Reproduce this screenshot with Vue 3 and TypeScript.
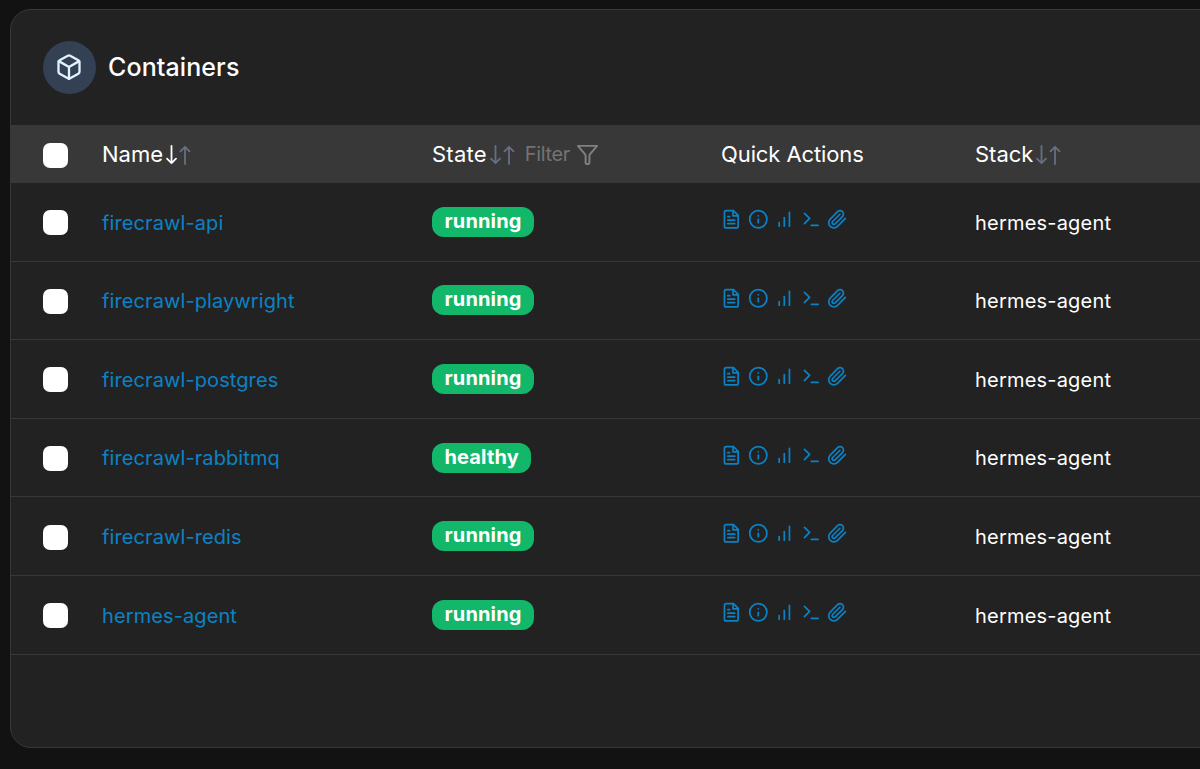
<script setup lang="ts">
interface Container {
  name: string
  state: string
  stack: string
}

const containers: Container[] = [
  { name: 'firecrawl-api', state: 'running', stack: 'hermes-agent' },
  { name: 'firecrawl-playwright', state: 'running', stack: 'hermes-agent' },
  { name: 'firecrawl-postgres', state: 'running', stack: 'hermes-agent' },
  { name: 'firecrawl-rabbitmq', state: 'healthy', stack: 'hermes-agent' },
  { name: 'firecrawl-redis', state: 'running', stack: 'hermes-agent' },
  { name: 'hermes-agent', state: 'running', stack: 'hermes-agent' },
]

const actions: { id: string; paths: string[] }[] = [
  {
    id: 'logs',
    paths: [
      'M14.500 2H6a2 2 0 0 0-2 2v16a2 2 0 0 0 2 2h12a2 2 0 0 0 2-2V7.500z',
      'M14 2v6h6',
      'M16 13H8',
      'M16 17H8',
      'M10 9H8',
    ],
  },
  { id: 'inspect', paths: ['M2 12a10 10 0 1 0 20 0a10 10 0 1 0-20 0', 'M12 16v-4', 'M12 8h.01'] },
  { id: 'stats', paths: ['M12 20V10', 'M18 20V4', 'M6 20v-4'] },
  { id: 'console', paths: ['M4 17l6-6-6-6', 'M12 19h8'] },
  {
    id: 'attach',
    paths: ['m21.44 11.05-9.19 9.19a6 6 0 0 1-8.49-8.49l8.57-8.57A4 4 0 1 1 18 8.84l-8.59 8.57a2 2 0 0 1-2.83-2.83l8.49-8.48'],
  },
]
</script>

<template>
  <main class="page">
    <section class="card">
      <header class="title-bar">
        <span class="badge">
          <svg viewBox="0 0 24 24" class="cube">
            <path d="M21 16V8a2 2 0 0 0-1-1.73l-7-4a2 2 0 0 0-2 0l-7 4A2 2 0 0 0 3 8v8a2 2 0 0 0 1 1.73l7 4a2 2 0 0 0 2 0l7-4A2 2 0 0 0 21 16z" />
            <path d="M3.27 6.96 12 12.01l8.73-5.05M12 22.08V12" />
          </svg>
        </span>
        <h1>Containers</h1>
      </header>

      <div class="row head">
        <span class="check"></span>
        <div class="cell"><span>Name</span>
          <svg class="sort" viewBox="0 0 26 20"><path class="on" d="M6.5 1v17M2 13.7l4.5 4.5 4.5-4.5" /><path d="M20 19V2M15.5 6.3 20 1.8l4.5 4.5" /></svg>
        </div>
        <div class="cell"><span class="state-label">State</span>
          <svg class="sort" viewBox="0 0 26 20"><path d="M6.5 1v17M2 13.7l4.5 4.5 4.5-4.5" /><path d="M20 19V2M15.5 6.3 20 1.8l4.5 4.5" /></svg>
          <span class="filter">Filter</span>
          <svg class="funnel" viewBox="0 0 24 24"><path d="M22 3H2l7.300 8.600q.7.800.7 1.900V20a2 2 0 0 0 4 0v-6.500q0-1.100.7-1.900z" /></svg>
        </div>
        <div class="cell"><span class="quick-label">Quick Actions</span></div>
        <div class="cell"><span>Stack</span>
          <svg class="sort" viewBox="0 0 26 20"><path d="M6.5 1v17M2 13.7l4.5 4.5 4.5-4.5" /><path d="M20 19V2M15.5 6.3 20 1.8l4.5 4.5" /></svg>
        </div>
      </div>

      <div v-for="c in containers" :key="c.name" class="row">
        <span class="check"></span>
        <a class="name">{{ c.name }}</a>
        <div><span class="pill">{{ c.state }}</span></div>
        <div class="actions">
          <svg v-for="a in actions" :key="a.id" viewBox="0 0 24 24">
            <path v-for="p in a.paths" :key="p" :d="p" />
          </svg>
        </div>
        <span class="stack">{{ c.stack }}</span>
      </div>
    </section>
  </main>
</template>

<style>
body {
  background: #121212;
  overflow: hidden;
}
</style>

<style scoped>
.page {
  box-sizing: border-box;
  height: 769px;
  padding: 9px 0 21px 10px;
  overflow: hidden;
  font-family: Inter, sans-serif;
  font-size: 20px;
  color: #fff;
}
.card {
  box-sizing: border-box;
  width: 1230px;
  height: 739px;
  border: 1px solid #383838;
  border-radius: 21px;
  background: #222;
  overflow: hidden;
}
svg {
  display: block;
  flex: none;
  fill: none;
  stroke: currentColor;
  stroke-width: 2;
  stroke-linecap: round;
  stroke-linejoin: round;
}
.title-bar {
  box-sizing: border-box;
  height: 115px;
  padding-left: 32px;
  display: flex;
  align-items: center;
  gap: 12px;
}
.badge {
  width: 53px;
  height: 53px;
  border-radius: 50%;
  background: #344054;
  color: #e0f2fe;
  display: flex;
  align-items: center;
  justify-content: center;
}
.cube {
  width: 28px;
  height: 28px;
  margin: 0 1px 1px 0;
}
h1 {
  margin: 0 0 2px;
  font-size: 25px;
  font-weight: 500;
  line-height: 32px;
  letter-spacing: 0.1px;
}
.row {
  box-sizing: border-box;
  height: 78.6px;
  padding-left: 32px;
  border-bottom: 1px solid #383838;
  display: grid;
  grid-template-columns: 59px 330px 289px 254px 1fr;
  align-items: center;
}
.head {
  height: 58px;
  border: 0;
  background: #383838;
  font-size: 22px;
}
.head .check {
  margin-top: 2px;
}
.check {
  width: 25px;
  height: 25px;
  border-radius: 7px;
  background: #fff;
  margin-top: 2px;
}
.cell {
  display: flex;
  align-items: center;
  white-space: nowrap;
}
.state-label {
  letter-spacing: 0.25px;
}
.quick-label {
  letter-spacing: -0.1px;
}
.sort {
  width: 26px;
  height: 20px;
  margin: 1px 0 0 2px;
  color: #667085;
  stroke-width: 1.8;
}
.sort .on {
  stroke: #fff;
}
.filter {
  margin-left: 10px;
  font-size: 20px;
  letter-spacing: -0.4px;
  color: #737373;
}
.funnel {
  width: 23px;
  height: 23px;
  margin: 1px 0 0 6px;
  color: #808080;
  stroke-width: 2;
}
.name {
  margin-top: 1.5px;
  color: #0b82c6;
  letter-spacing: 0.1px;
}
.stack {
  margin-top: 1.5px;
  letter-spacing: 0.2px;
}
.pill {
  display: inline-block;
  height: 30px;
  padding: 0 12.5px;
  border-radius: 12px;
  background: #12b76a;
  font-weight: 700;
  letter-spacing: 0.15px;
  line-height: 29px;
  vertical-align: middle;
}
.actions {
  display: flex;
  gap: 6px;
  margin-top: -5px;
  color: #0b82c6;
}
.actions svg {
  width: 20.6px;
  height: 20.6px;
}
</style>
